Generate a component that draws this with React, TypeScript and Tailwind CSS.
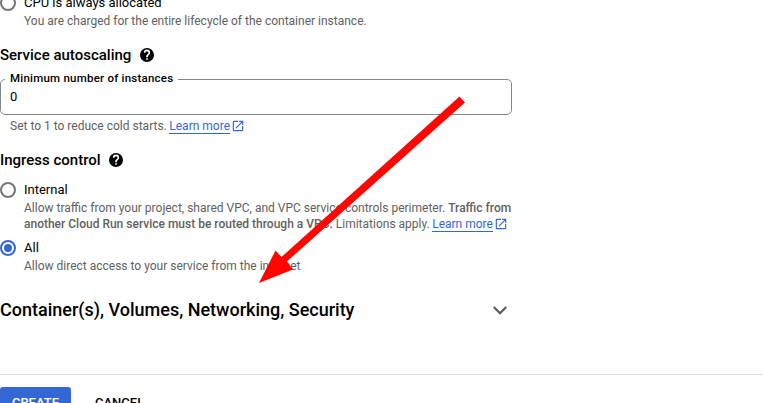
import type { ReactNode } from "react";

function HelpIcon() {
  return (
    <svg className="size-4" viewBox="0 0 24 24" fill="black" aria-hidden="true">
      <path d="M12 1.5a10.5 10.5 0 1 0 0 21 10.5 10.5 0 0 0 0-21zm1.2 17.6h-2.5v-2.4h2.5zm2.6-8.1-1.1 1.1c-.9.9-1.5 1.7-1.5 3.3h-2.5v-.6c0-1.3.6-2.5 1.5-3.4l1.4-1.4c.5-.4.7-.9.7-1.5a2.3 2.3 0 0 0-4.6 0H7.300a4.700 4.700 0 0 1 9.400 0c0 1-.4 1.900-.9 2.500z" />
    </svg>
  );
}

function LearnMore() {
  return (
    <a className="inline-flex text-[#3367d6]">
      <span className="h-[16px] border-b border-[#3367d6]">Learn more</span>
      <svg className="ml-[1px] mt-[1px] size-[14px]" viewBox="0 0 24 24" fill="currentColor" aria-hidden="true">
        <path d="M19 19H5V5h7V3H5a2 2 0 0 0-2 2v14a2 2 0 0 0 2 2h14c1.100 0 2-.9 2-2v-7h-2v7zM14 3v2h3.590l-9.830 9.830 1.410 1.410L19 6.410V10h2V3h-7z" />
      </svg>
    </a>
  );
}

function Radio({ label, checked = false, children }: { label: string; checked?: boolean; children: ReactNode }) {
  return (
    <div>
      <div className="flex h-5 items-center gap-2">
        {checked ? (
          <span className="flex size-4 items-center justify-center rounded-full border-2 border-[#3367d6]">
            <span className="size-2 rounded-full bg-[#3367d6]" />
          </span>
        ) : (
          <span className="size-4 rounded-full border-2 border-[#757575]" />
        )}
        <span className="text-[13px]">{label}</span>
      </div>
      <div className="pl-6 text-xs leading-4 text-[#616161]">{children}</div>
    </div>
  );
}

function SectionTitle({ children }: { children: ReactNode }) {
  return (
    <div className="flex h-6 items-center gap-[7.5px] text-[15px] font-medium">
      {children}
      <HelpIcon />
    </div>
  );
}

export default function App() {
  return (
    <div className="relative h-[403px] w-[763px] overflow-hidden bg-white font-['Roboto','Liberation_Sans',sans-serif] whitespace-nowrap text-black">
      <div className="-mt-[7px] w-[512px]">
        <Radio label="CPU is always allocated">You are charged for the entire lifecycle of the container instance.</Radio>

        <div className="mt-[14px]">
          <SectionTitle>Service autoscaling</SectionTitle>
        </div>
        <fieldset className="mt-[4px] h-[44px] rounded-[5px] border border-[#80868b] pl-[4px]">
          <legend className="h-4 px-[5px] text-[11.5px] leading-[15px] font-medium tracking-[0.23px]">Minimum number of instances</legend>
          <div className="pl-[5px] text-[13px] leading-5">0</div>
        </fieldset>
        <div className="mt-[3px] flex h-4 gap-[2.5px] pl-[10px] text-xs leading-4 text-[#616161]">
          <span>Set to 1 to reduce cold starts.</span>
          <LearnMore />
        </div>

        <div className="mt-[14px]">
          <SectionTitle>Ingress control</SectionTitle>
        </div>
        <div className="mt-2 flex flex-col gap-[6px]">
          <Radio label="Internal">
            <div>
              Allow traffic from your project, shared VPC, and VPC service controls perimeter. <b className="font-medium">Traffic from</b>
            </div>
            <div className="flex h-4 gap-[2.5px]">
              <span>
                <b className="font-medium">another Cloud Run service must be routed through a VPC.</b> Limitations apply.
              </span>
              <LearnMore />
            </div>
          </Radio>
          <Radio label="All" checked>
            Allow direct access to your service from the internet
          </Radio>
        </div>

        <div className="mt-[22px] flex h-7 items-center justify-between pr-[5px] text-lg font-medium">
          Container(s), Volumes, Networking, Security
          <svg className="h-[9px] w-[14px]" viewBox="0 0 14 9" fill="none" stroke="#5a5a5a" strokeWidth="2.2" aria-hidden="true">
            <path d="M.8 1 7 7.300 13.200 1" />
          </svg>
        </div>
      </div>

      <div className="mt-[50px] flex h-[60px] items-start gap-6 border-t border-[#dadce0] pt-3 text-[13px] font-medium">
        <button className="h-8 w-[71px] rounded-[3px] bg-[#3367d6] text-white shadow-sm">CREATE</button>
        <button className="h-8">CANCEL</button>
      </div>

      <svg className="absolute inset-0" width="763" height="403" viewBox="0 0 763 403" fill="#ff0600" aria-hidden="true">
        <path d="M459.500 96.500 465 102.500 287 261.500 293 269.500 259 283 275.500 250.500 281.500 257Z" />
      </svg>
    </div>
  );
}
